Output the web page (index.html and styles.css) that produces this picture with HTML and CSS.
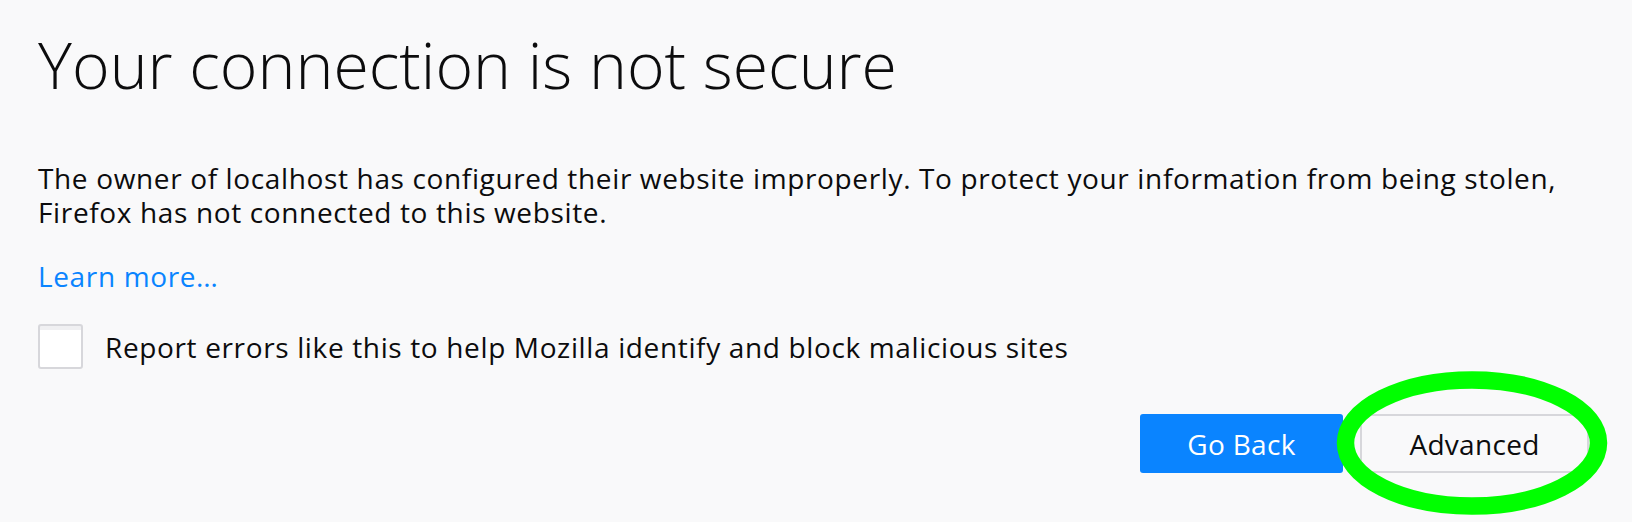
FILE: index.html
```html
<!DOCTYPE html>
<html lang="en">
<head>
<meta charset="utf-8">
<title>Insecure Connection</title>
<link rel="stylesheet" href="styles.css">
</head>
<body>
<main class="page">
  <h1 class="title">Your connection is not secure</h1>
  <p class="desc">The owner of localhost has configured their website improperly. To protect your information from being stolen, Firefox has not connected to this website.</p>
  <p class="learn"><a href="#" class="link">Learn more…</a></p>
  <label class="report">
    <span class="checkbox"></span>
    <span class="report-text">Report errors like this to help Mozilla identify and block malicious sites</span>
  </label>
  <div class="actions">
    <button class="btn btn-primary">Go Back</button>
    <button class="btn btn-secondary">Advanced</button>
  </div>
</main>
<svg class="highlight" width="300" height="170" viewBox="0 0 300 170" aria-hidden="true">
  <ellipse cx="150" cy="85" rx="126.5" ry="63" fill="none" stroke="#00ff00" stroke-width="17.5"/>
</svg>
</body>
</html>
```
FILE: styles.css
```css
html, body {
  margin: 0;
  padding: 0;
  background: #f9f9fa;
}
body {
  color: #0c0c0d;
  font-family: "Open Sans", "Noto Sans", sans-serif;
  width: 1632px;
  height: 522px;
  overflow: hidden;
  position: relative;
}
.page {
  padding: 0 43px 0 38px;
  display: flex;
  flex-direction: column;
}
.title {
  margin: 0;
  padding-top: 20px;
  font-size: 64.3px;
  font-weight: 300;
  line-height: 88px;
}
.desc,
.learn,
.report {
  font-size: 28px;
  line-height: 34px;
  letter-spacing: 0.64px;
}
.desc {
  margin: 53px 0 0;
}
.learn {
  margin: 30px 0 0;
}
.link {
  color: #0a84ff;
  text-decoration: none;
}
.report {
  margin-top: 31px;
  display: flex;
  align-items: center;
  gap: 22px;
}
.checkbox {
  width: 41px;
  height: 41px;
  border: 2px solid #d7d7db;
  border-radius: 3px;
  background: linear-gradient(#f0f0f2 0 4px, #ffffff 4px);
  flex: none;
}
.actions {
  margin-top: 45px;
  display: flex;
  justify-content: flex-end;
  gap: 17px;
}
.btn {
  height: 59px;
  font-family: inherit;
  font-size: 28px;
  letter-spacing: 0.3px;
  border-radius: 3px;
  padding: 0;
}
.btn-primary {
  width: 203px;
  background: #0a84ff;
  color: #ffffff;
  border: none;
}
.btn-secondary {
  width: 229px;
  background: #f9f9fa;
  color: #0c0c0d;
  border: 2px solid #d7d7db;
}
.highlight {
  position: absolute;
  left: 1322px;
  top: 358px;
}
```
